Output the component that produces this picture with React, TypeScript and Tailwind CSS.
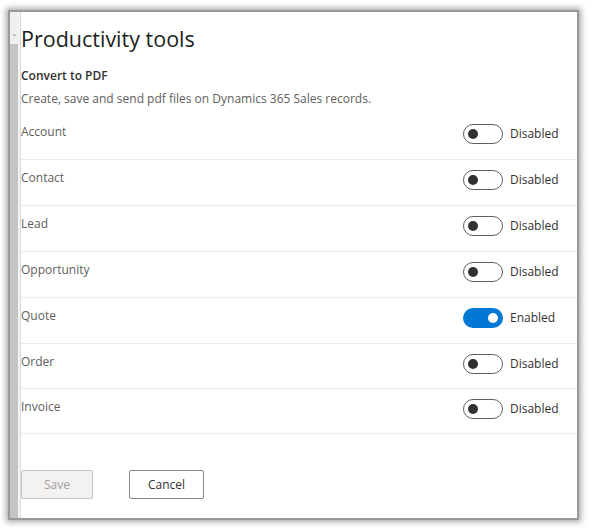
import React from "react";

const rows: { label: string; on: boolean }[] = [
  { label: "Account", on: false },
  { label: "Contact", on: false },
  { label: "Lead", on: false },
  { label: "Opportunity", on: false },
  { label: "Quote", on: true },
  { label: "Order", on: false },
  { label: "Invoice", on: false },
];

function Toggle({ on }: { on: boolean }) {
  if (on) {
    return (
      <div className="flex h-[20px] w-[40px] items-center justify-end rounded-full bg-[#0078d4] pr-[5px]">
        <div className="h-[10px] w-[10px] rounded-full bg-white" />
      </div>
    );
  }
  return (
    <div className="flex h-[20px] w-[40px] items-center rounded-full border border-[#605e5c] bg-white pl-[4px]">
      <div className="h-[10px] w-[10px] rounded-full bg-[#323130]" />
    </div>
  );
}

export default function App() {
  return (
    <div
      className="relative h-[531px] w-[591px] overflow-hidden bg-white pl-[8px] pt-[10px]"
      style={{ fontFamily: '"Open Sans", "Noto Sans", sans-serif' }}
    >
      <div className="flex h-[510px] w-[571px] border-2 border-[#9a9a9a] bg-white shadow-[0_0_6px_2px_rgba(0,0,0,0.35)]">
        <div className="flex w-[8px] flex-col bg-[#f0f0f0]">
          <div className="flex h-[32px] items-start justify-center pt-[20px] text-[5px] leading-none text-[#a0a0a0]">▴</div>
          <div className="flex-1 bg-[#c4c4c4]" />
        </div>
        <div className="w-[2px] bg-[#f4f4f4]" />
        <div className="w-px bg-[#d8d8d8]" />
        <div className="flex flex-1 flex-col">
          <h1 className="pt-[11px] text-[21.5px] leading-[32px] text-[#201f1e]">Productivity tools</h1>
          <div className="mt-[13px] text-[12px] font-semibold leading-[16px] text-[#323130]">Convert to PDF</div>
          <div className="mt-[7px] text-[12px] leading-[16px] text-[#605e5c]">
            Create, save and send pdf files on Dynamics 365 Sales records.
          </div>
          <div className="mt-[7px] flex flex-col">
            {rows.map((r, i) => (
              <div
                key={r.label}
                className={`flex border-b border-[#edebe9] pr-[18px] ${i >= 5 ? "h-[45px]" : "h-[46px]"}`}
              >
                <div className="flex-1 pt-[10px] text-[12px] leading-[16px] text-[#605e5c]">{r.label}</div>
                <div className="flex w-[96px] items-center gap-[7px] self-start pt-[10px]">
                  <Toggle on={r.on} />
                  <span className="text-[12px] leading-[16px] text-[#323130]">{r.on ? "Enabled" : "Disabled"}</span>
                </div>
              </div>
            ))}
          </div>
          <div className="mt-[36px] flex gap-[36px]">
            <button className="h-[29px] w-[72px] rounded-[2px] border border-[#c8c6c4] bg-[#f3f2f1] text-[12px] text-[#a19f9d]">
              Save
            </button>
            <button className="h-[29px] w-[75px] rounded-[2px] border border-[#8a8886] bg-white text-[12px] text-[#323130]">
              Cancel
            </button>
          </div>
        </div>
      </div>
    </div>
  );
}
